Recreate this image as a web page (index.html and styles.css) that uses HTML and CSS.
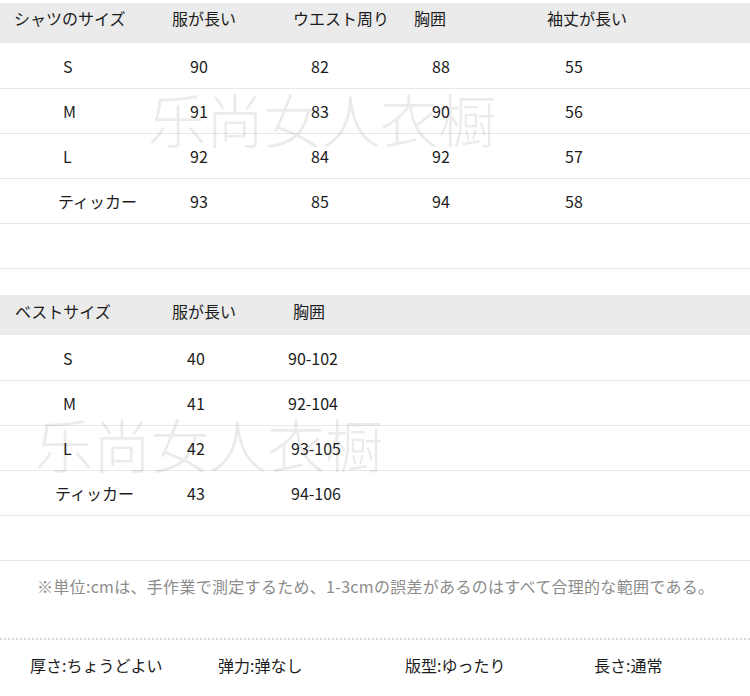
FILE: index.html
```html
<!DOCTYPE html>
<html lang="ja">
<head>
<meta charset="utf-8">
<title>サイズ表</title>
<link rel="stylesheet" href="styles.css">
</head>
<body>
<div class="page">
  <section class="table t1">
    <div class="wm wm1">乐尚女人衣橱</div>
    <div class="row head">
      <div class="c first">シャツのサイズ</div>
      <div class="c">服が長い</div>
      <div class="c">ウエスト周り</div>
      <div class="c">胸囲</div>
      <div class="c">袖丈が長い</div>
    </div>
    <div class="row top"><div class="c first">S</div><div class="c">90</div><div class="c">82</div><div class="c">88</div><div class="c">55</div></div>
    <div class="row"><div class="c first">M</div><div class="c">91</div><div class="c">83</div><div class="c">90</div><div class="c">56</div></div>
    <div class="row"><div class="c first">L</div><div class="c">92</div><div class="c">84</div><div class="c">92</div><div class="c">57</div></div>
    <div class="row"><div class="c first wide">ティッカー</div><div class="c">93</div><div class="c">85</div><div class="c">94</div><div class="c">58</div></div>
    <div class="row"></div>
  </section>

  <section class="table t2">
    <div class="wm wm2">乐尚女人衣橱</div>
    <div class="row head">
      <div class="c first">ベストサイズ</div>
      <div class="c">服が長い</div>
      <div class="c">胸囲</div>
    </div>
    <div class="row top"><div class="c first">S</div><div class="c">40</div><div class="c">90-102</div></div>
    <div class="row"><div class="c first">M</div><div class="c">41</div><div class="c">92-104</div></div>
    <div class="row"><div class="c first">L</div><div class="c">42</div><div class="c shift">93-105</div></div>
    <div class="row"><div class="c first wide2">ティッカー</div><div class="c">43</div><div class="c shift">94-106</div></div>
    <div class="row"></div>
  </section>

  <p class="note">※単位:cmは、手作業で測定するため、1-3cmの誤差があるのはすべて合理的な範囲である。</p>

  <div class="attrs">
    <span>厚さ:ちょうどよい</span>
    <span>弹力:弹なし</span>
    <span>版型:ゆったり</span>
    <span>長さ:通常</span>
  </div>
</div>
</body>
</html>
```

FILE: styles.css
```css
* { box-sizing: border-box; }
html, body { margin: 0; padding: 0; background: #fff; }
body {
  font-family: "Noto Sans CJK JP", "Noto Sans", sans-serif;
  font-size: 16px;
  color: #1c1c1c;
  width: 750px;
  height: 696px;
  overflow: hidden;
}
.page { padding-top: 3px; }

.table { position: relative; }
.t2 { margin-top: 26px; }

.row {
  display: grid;
  height: 45px;
  align-items: center;
  border-bottom: 1px solid #e8e8e8;
  line-height: 24px;
}
.row.top { height: 46px; }
.t1 .row { grid-template-columns: 172px 121px 121px 133px 1fr; }
.t2 .row { grid-template-columns: 172px 116px 1fr; }

.row.head {
  height: 40px;
  background: #ebebeb;
  border-bottom: none;
  align-items: start;
  padding-top: 3px;
}
.t2 .row.head { padding-top: 4px; }

.c { padding-left: 18px; white-space: nowrap; }
.c.first { padding-left: 63px; }
.c.wide { padding-left: 58px; }
.head .c { padding-left: 0; }
.head .c.first { padding-left: 14px; }
.t2 .c { padding-left: 15px; }
.t2 .c.first { padding-left: 63px; }
.t2 .c.wide2 { padding-left: 55px; }
.t2 .row .c:nth-child(3) { padding-left: 0; }
.t2 .row .c.shift { padding-left: 3px; }
.t2 .head .c { padding-left: 0; }
.t2 .head .c.first { padding-left: 15px; }
.t2 .head .c:nth-child(3) { padding-left: 5px; }

.wm {
  position: absolute;
  font-size: 58px;
  line-height: 1;
  font-weight: 200;
  color: rgba(0, 0, 0, 0.08);
  white-space: nowrap;
  pointer-events: none;
  font-family: "Noto Sans CJK SC", sans-serif;
}
.wm1 { left: 148px; top: 86px; }
.wm2 { left: 35px; top: 119px; }

.note {
  margin: 13px 0 0;
  padding-left: 37px;
  line-height: 24px;
  letter-spacing: 0.3px;
  color: #8c8c8c;
  height: 66px;
  border-bottom: 2px dotted #d8d8d8;
}

.attrs {
  display: grid;
  grid-template-columns: 188px 187px 189px 1fr;
  padding-left: 30px;
  padding-top: 13px;
  line-height: 24px;
}
```
